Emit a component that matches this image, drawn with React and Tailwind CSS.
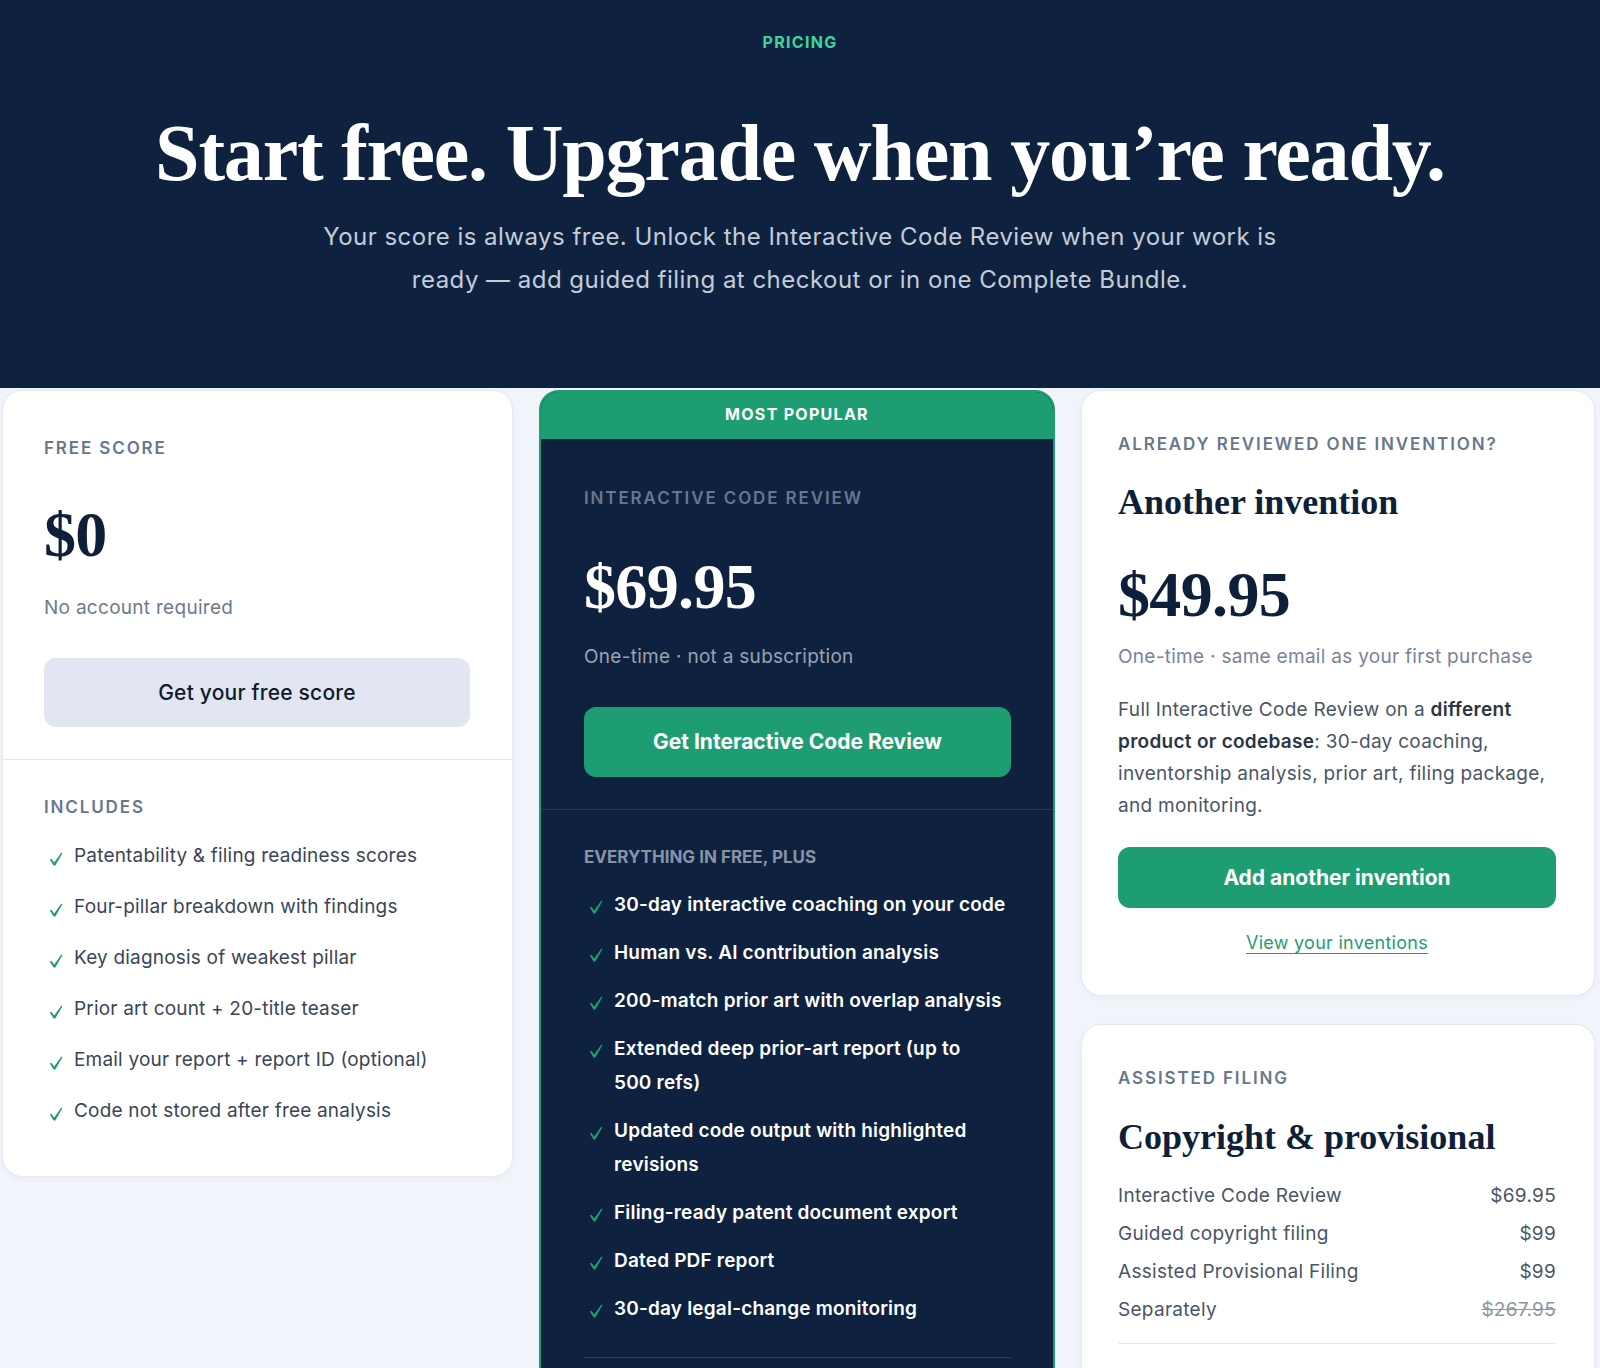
import React from "react";

const sans = { fontFamily: "Inter, 'Noto Sans', sans-serif" };

const freeFeatures = [
  "Patentability & filing readiness scores",
  "Four-pillar breakdown with findings",
  "Key diagnosis of weakest pillar",
  "Prior art count + 20-title teaser",
  "Email your report + report ID (optional)",
  "Code not stored after free analysis",
];

const reviewFeatures = [
  "30-day interactive coaching on your code",
  "Human vs. AI contribution analysis",
  "200-match prior art with overlap analysis",
  <>
    Extended deep prior-art report (up to
    <br />
    500 refs)
  </>,
  "Updated code output with highlighted revisions",
  "Filing-ready patent document export",
  "Dated PDF report",
  "30-day legal-change monitoring",
];

const filingRows = [
  { label: "Interactive Code Review", price: "$69.95" },
  { label: "Guided copyright filing", price: "$99" },
  { label: "Assisted Provisional Filing", price: "$99" },
];

// hand-drawn style tick, heavier at the joint
function Check({ className = "" }) {
  return (
    <span className={`w-[30px] shrink-0 ${className}`}>
      <svg width="14" height="14" viewBox="0 0 14 14" className="block">
        <path d="M0.8 7.6 L2.3 6.8 L5.2 10.4 L12.4 0.6 L13.4 1.3 L6.3 13.4 L4.6 13.4 Z" fill="#1f9d72" />
      </svg>
    </span>
  );
}

function Eyebrow({ children, className = "" }) {
  return (
    <p className={`text-[17px] font-semibold uppercase leading-6 tracking-[0.11em] text-[#67778e] ${className}`}>
      {children}
    </p>
  );
}

function Price({ children, className = "" }) {
  return (
    <p className={`font-['Liberation_Serif'] text-[64px] font-bold leading-none tracking-[-0.01em] ${className}`}>
      {children}
    </p>
  );
}

export default function App() {
  return (
    <div className="min-h-screen bg-[#f1f4fb]" style={sans}>
      {/* Hero */}
      <header className="flex h-[388px] flex-col items-center bg-[#0e2240] pt-[32px] text-center">
        <p className="text-[16px] font-bold uppercase leading-5 tracking-[0.08em] text-[#3fd49a]">Pricing</p>
        <h1 className="mt-[61px] font-['Liberation_Serif'] text-[80px] font-bold leading-none tracking-[-0.015em] text-white">
          Start free. Upgrade when you’re ready.
        </h1>
        <p className="mt-[22px] max-w-[990px] text-[24px] leading-[43px] tracking-[0.02em] text-[#c5ccd8]">
          Your score is always free. Unlock the Interactive Code Review when your work is ready — add guided filing at
          checkout or in one Complete Bundle.
        </p>
      </header>

      {/* Plans */}
      <div className="grid grid-cols-[511px_516px_514px] items-start gap-x-[26px] pl-[2px] pt-[2px]">
        {/* Free */}
        <div className="rounded-[20px] border border-[#e3e8f1] bg-white shadow-[0_2px_6px_rgba(15,34,64,0.04)]">
          <div className="border-b border-[#e3e8f1] pl-[41px] pr-[42px] pt-[45px] pb-[32px]">
            <Eyebrow>Free score</Eyebrow>
            <Price className="mt-[43px] text-[#0e1f3a]">$0</Price>
            <p className="mt-[27px] text-[19px] leading-7 tracking-[0.015em] text-[#6b7a8f]">No account required</p>
            <button className="mt-[36px] flex h-[69px] w-full items-center justify-center rounded-[12px] bg-[#e1e6f2] text-[21px] font-medium tracking-[0.01em] text-[#111a2b]">
              Get your free score
            </button>
          </div>
          <div className="pl-[41px] pr-[20px] pt-[35px] pb-[51px]">
            <Eyebrow>Includes</Eyebrow>
            <ul className="mt-[23px] flex flex-col gap-[23px]">
              {freeFeatures.map((f) => (
                <li key={f} className="flex items-start text-[19px] leading-7 tracking-[0.01em] text-[#3a4557]">
                  <Check className="pl-[5px] pt-[10px]" />
                  <span>{f}</span>
                </li>
              ))}
            </ul>
          </div>
        </div>

        {/* Interactive Code Review */}
        <div className="overflow-hidden rounded-t-[20px] border-2 border-[#1f9d72] bg-[#0e2240] pb-[120px]">
          <div className="flex h-[47px] items-center justify-center bg-[#1f9d72] pb-[4px] text-[16px] font-bold uppercase tracking-[0.08em] text-white">
            Most popular
          </div>
          <div className="border-b border-[#22375a] pl-[43px] pr-[42px] pt-[47px] pb-[32px]">
            <Eyebrow className="text-[#9ea8b7]">Interactive Code Review</Eyebrow>
            <Price className="mt-[45px] text-white">$69.95</Price>
            <p className="mt-[24px] text-[19px] leading-7 tracking-[0.015em] text-[#98a3b3]">One-time · not a subscription</p>
            <button className="mt-[36px] flex h-[70px] w-full items-center justify-center rounded-[12px] bg-[#1f9d72] text-[21px] font-bold text-white">
              Get Interactive Code Review
            </button>
          </div>
          <div className="pl-[43px] pr-[38px] pt-[35px]">
            <p className="text-[17px] font-bold uppercase leading-6 text-[#8893a5]">Everything in free, plus</p>
            <ul className="mt-[19px] flex flex-col gap-[14px]">
              {reviewFeatures.map((f, i) => (
                <li key={i} className="flex items-start text-[19px] font-semibold leading-[34px] tracking-[0.01em] text-white">
                  <Check className="pl-[5px] pt-[12px]" />
                  <span className="max-w-[398px]">{f}</span>
                </li>
              ))}
            </ul>
            <div className="mt-[31px] mr-[4px] h-px bg-[#2a3e60]" />
          </div>
        </div>

        {/* Right column */}
        <div className="flex flex-col gap-[28px]">
          <div className="rounded-[20px] border border-[#e3e8f1] bg-white pl-[36px] pr-[38px] pt-[41px] pb-[40px] shadow-[0_2px_6px_rgba(15,34,64,0.04)]">
            <Eyebrow>Already reviewed one invention?</Eyebrow>
            <h2 className="mt-[25px] font-['Liberation_Serif'] text-[36px] font-bold leading-[43px] text-[#0e1f3a]">
              Another invention
            </h2>
            <Price className="mt-[39px] text-[#0e1f3a]">$49.95</Price>
            <p className="mt-[16px] text-[19px] leading-7 tracking-[0.015em] text-[#77849a]">
              One-time · same email as your first purchase
            </p>
            <p className="mt-[23px] text-[19px] leading-[32px] tracking-[0.015em] text-[#4a5566]">
              Full Interactive Code Review on a <b className="font-semibold text-[#2b3444]">different</b>{" "}
              <b className="font-semibold text-[#2b3444]">product or codebase</b>: 30-day coaching, inventorship analysis,
              prior art, filing package, and monitoring.
            </p>
            <button className="mt-[25px] flex h-[61px] w-full items-center justify-center rounded-[12px] bg-[#1f9d72] text-[21px] font-bold text-white">
              Add another invention
            </button>
            <a href="#" className="mt-[23px] block text-center text-[18px] leading-6 tracking-[0.015em] text-[#1f9d72] underline underline-offset-4">
              View your inventions
            </a>
          </div>

          <div className="rounded-[20px] border border-[#e3e8f1] bg-white pl-[36px] pr-[38px] pt-[41px] pb-[80px] shadow-[0_2px_6px_rgba(15,34,64,0.04)]">
            <Eyebrow>Assisted filing</Eyebrow>
            <h2 className="mt-[26px] font-['Liberation_Serif'] text-[36px] font-bold leading-[43px] text-[#0e1f3a]">
              Copyright &amp; provisional
            </h2>
            <div className="mt-[23px] flex flex-col gap-[10px] text-[19px] leading-7 tracking-[0.015em] text-[#4a5566]">
              {filingRows.map((r) => (
                <div key={r.label} className="flex justify-between">
                  <span>{r.label}</span>
                  <span>{r.price}</span>
                </div>
              ))}
              <div className="flex justify-between">
                <span>Separately</span>
                <span className="text-[#8b95a5] line-through">$267.95</span>
              </div>
            </div>
            <div className="mt-[19px] h-px bg-[#e1e6f0]" />
          </div>
        </div>
      </div>
    </div>
  );
}
